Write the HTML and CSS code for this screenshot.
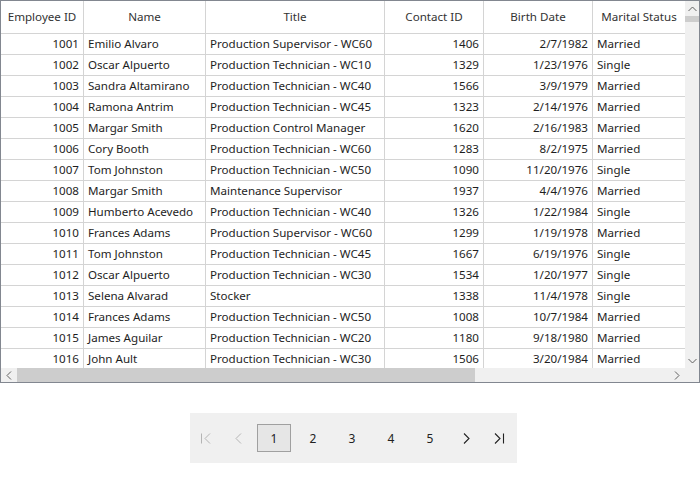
FILE: index.html
```html
<!DOCTYPE html>
<html>
<head>
<meta charset="utf-8">
<link rel="stylesheet" href="styles.css">
</head>
<body>
<div class="grid">
  <div class="grid-main">
    <div class="viewport">
      <div class="row header">
        <div class="cell c">Employee ID</div>
        <div class="cell c">Name</div>
        <div class="cell c">Title</div>
        <div class="cell c">Contact ID</div>
        <div class="cell c">Birth Date</div>
        <div class="cell c">Marital Status</div>
      </div>
      <div class="row"><div class="cell r">1001</div><div class="cell">Emilio Alvaro</div><div class="cell">Production Supervisor - WC60</div><div class="cell r">1406</div><div class="cell r">2/7/1982</div><div class="cell">Married</div></div>
      <div class="row"><div class="cell r">1002</div><div class="cell">Oscar Alpuerto</div><div class="cell">Production Technician - WC10</div><div class="cell r">1329</div><div class="cell r">1/23/1976</div><div class="cell">Single</div></div>
      <div class="row"><div class="cell r">1003</div><div class="cell">Sandra Altamirano</div><div class="cell">Production Technician - WC40</div><div class="cell r">1566</div><div class="cell r">3/9/1979</div><div class="cell">Married</div></div>
      <div class="row"><div class="cell r">1004</div><div class="cell">Ramona Antrim</div><div class="cell">Production Technician - WC45</div><div class="cell r">1323</div><div class="cell r">2/14/1976</div><div class="cell">Married</div></div>
      <div class="row"><div class="cell r">1005</div><div class="cell">Margar Smith</div><div class="cell">Production Control Manager</div><div class="cell r">1620</div><div class="cell r">2/16/1983</div><div class="cell">Married</div></div>
      <div class="row"><div class="cell r">1006</div><div class="cell">Cory Booth</div><div class="cell">Production Technician - WC60</div><div class="cell r">1283</div><div class="cell r">8/2/1975</div><div class="cell">Married</div></div>
      <div class="row"><div class="cell r">1007</div><div class="cell">Tom Johnston</div><div class="cell">Production Technician - WC50</div><div class="cell r">1090</div><div class="cell r">11/20/1976</div><div class="cell">Single</div></div>
      <div class="row"><div class="cell r">1008</div><div class="cell">Margar Smith</div><div class="cell">Maintenance Supervisor</div><div class="cell r">1937</div><div class="cell r">4/4/1976</div><div class="cell">Married</div></div>
      <div class="row"><div class="cell r">1009</div><div class="cell">Humberto Acevedo</div><div class="cell">Production Technician - WC40</div><div class="cell r">1326</div><div class="cell r">1/22/1984</div><div class="cell">Single</div></div>
      <div class="row"><div class="cell r">1010</div><div class="cell">Frances Adams</div><div class="cell">Production Supervisor - WC60</div><div class="cell r">1299</div><div class="cell r">1/19/1978</div><div class="cell">Married</div></div>
      <div class="row"><div class="cell r">1011</div><div class="cell">Tom Johnston</div><div class="cell">Production Technician - WC45</div><div class="cell r">1667</div><div class="cell r">6/19/1976</div><div class="cell">Single</div></div>
      <div class="row"><div class="cell r">1012</div><div class="cell">Oscar Alpuerto</div><div class="cell">Production Technician - WC30</div><div class="cell r">1534</div><div class="cell r">1/20/1977</div><div class="cell">Single</div></div>
      <div class="row"><div class="cell r">1013</div><div class="cell">Selena Alvarad</div><div class="cell">Stocker</div><div class="cell r">1338</div><div class="cell r">11/4/1978</div><div class="cell">Single</div></div>
      <div class="row"><div class="cell r">1014</div><div class="cell">Frances Adams</div><div class="cell">Production Technician - WC50</div><div class="cell r">1008</div><div class="cell r">10/7/1984</div><div class="cell">Married</div></div>
      <div class="row"><div class="cell r">1015</div><div class="cell">James Aguilar</div><div class="cell">Production Technician - WC20</div><div class="cell r">1180</div><div class="cell r">9/18/1980</div><div class="cell">Married</div></div>
      <div class="row"><div class="cell r">1016</div><div class="cell">John Ault</div><div class="cell">Production Technician - WC30</div><div class="cell r">1506</div><div class="cell r">3/20/1984</div><div class="cell">Married</div></div>
    </div>
    <div class="vscroll">
      <div class="sarrow"><svg width="9" height="6" viewBox="0 0 9 6"><path d="M0.5 5 L4.5 1 L8.5 5" fill="none" stroke="#606060" stroke-width="1"/></svg></div>
      <div class="vthumb"></div>
      <div class="vtrack"></div>
      <div class="sarrow"><svg width="9" height="6" viewBox="0 0 9 6"><path d="M0.5 1 L4.5 5 L8.5 1" fill="none" stroke="#606060" stroke-width="1"/></svg></div>
    </div>
  </div>
  <div class="hbar">
    <div class="hscroll">
      <div class="harrow"><svg width="6" height="9" viewBox="0 0 6 9"><path d="M5 0.5 L1 4.5 L5 8.5" fill="none" stroke="#606060" stroke-width="1"/></svg></div>
      <div class="hthumb"></div>
      <div class="htrack"></div>
      <div class="harrow"><svg width="6" height="9" viewBox="0 0 6 9"><path d="M1 0.5 L5 4.5 L1 8.5" fill="none" stroke="#606060" stroke-width="1"/></svg></div>
    </div>
    <div class="corner"></div>
  </div>
</div>

<div class="pager-wrap">
  <div class="pager">
    <div class="pbtn nav disabled"><svg width="11" height="11" viewBox="0 0 11 11"><path d="M1.5 0.5 V10.5 M10 0.5 L5 5.5 L10 10.5" fill="none" stroke="#b4b4b4" stroke-width="1"/></svg></div>
    <div class="pbtn nav disabled"><svg width="7" height="11" viewBox="0 0 7 11"><path d="M6 0.5 L1 5.5 L6 10.5" fill="none" stroke="#b4b4b4" stroke-width="1"/></svg></div>
    <div class="pbtn num active">1</div>
    <div class="pbtn num">2</div>
    <div class="pbtn num">3</div>
    <div class="pbtn num">4</div>
    <div class="pbtn num">5</div>
    <div class="pbtn nav"><svg width="7" height="11" viewBox="0 0 7 11"><path d="M1 0.5 L6 5.5 L1 10.5" fill="none" stroke="#222" stroke-width="1.1"/></svg></div>
    <div class="pbtn nav"><svg width="11" height="11" viewBox="0 0 11 11"><path d="M1 0.5 L6 5.5 L1 10.5 M9.5 0.5 V10.5" fill="none" stroke="#222" stroke-width="1.1"/></svg></div>
  </div>
</div>
</body>
</html>
```

FILE: styles.css
```css
html, body {
  margin: 0;
  padding: 0;
  background: #fff;
}
body {
  width: 700px;
  height: 479px;
  overflow: hidden;
  font-family: "Noto Sans", "Open Sans", sans-serif;
  font-size: 11.6px;
  color: #1e1e1e;
}
.grid {
  box-sizing: border-box;
  width: 700px;
  height: 383px;
  border: 1px solid #828790;
  display: flex;
  flex-direction: column;
}
.grid-main {
  display: flex;
  height: 367px;
}
.viewport {
  width: 684px;
  height: 367px;
  overflow: hidden;
}
.row {
  display: grid;
  grid-template-columns: 83px 122px 179px 99px 109px 92px;
  height: 21px;
  box-sizing: border-box;
  border-bottom: 1px solid #d4d4d4;
  width: 684px;
}
.row.header {
  height: 33px;
  color: #333;
}
.cell {
  box-sizing: border-box;
  border-right: 1px solid #d4d4d4;
  padding: 0 4px 2px;
  display: flex;
  align-items: center;
  white-space: nowrap;
  overflow: hidden;
}
.cell:last-child { border-right: none; }
.cell.r { justify-content: flex-end; }
.cell.c { justify-content: center; padding-left: 2px; padding-right: 2px; }
.vscroll {
  width: 14px;
  background: #f0f0f0;
  display: flex;
  flex-direction: column;
}
.sarrow {
  height: 15px;
  display: flex;
  align-items: center;
  justify-content: center;
}
.vthumb {
  height: 6px;
  background: #cdcdcd;
}
.vtrack { flex: 1; }
.hbar {
  display: flex;
  height: 14px;
  background: #f0f0f0;
}
.hscroll {
  width: 684px;
  display: flex;
}
.harrow {
  width: 16px;
  display: flex;
  align-items: center;
  justify-content: center;
}
.hthumb {
  width: 458px;
  background: #cdcdcd;
}
.htrack { flex: 1; }
.corner { flex: 1; }
.pager-wrap {
  display: flex;
  justify-content: center;
  padding-top: 30px;
  padding-left: 7px;
}
.pager {
  width: 327px;
  height: 50px;
  box-sizing: border-box;
  padding-right: 3px;
  background: #f0f0f0;
  display: flex;
  align-items: center;
  justify-content: center;
  gap: 5px;
  font-size: 12px;
  color: #222;
}
.pbtn {
  height: 28px;
  box-sizing: border-box;
  display: flex;
  align-items: center;
  justify-content: center;
}
.pbtn.nav { width: 28px; }
.pbtn.num { width: 34px; }
.pbtn.active {
  border: 1px solid #a0a0a0;
  background: #e6e6e6;
}
```
